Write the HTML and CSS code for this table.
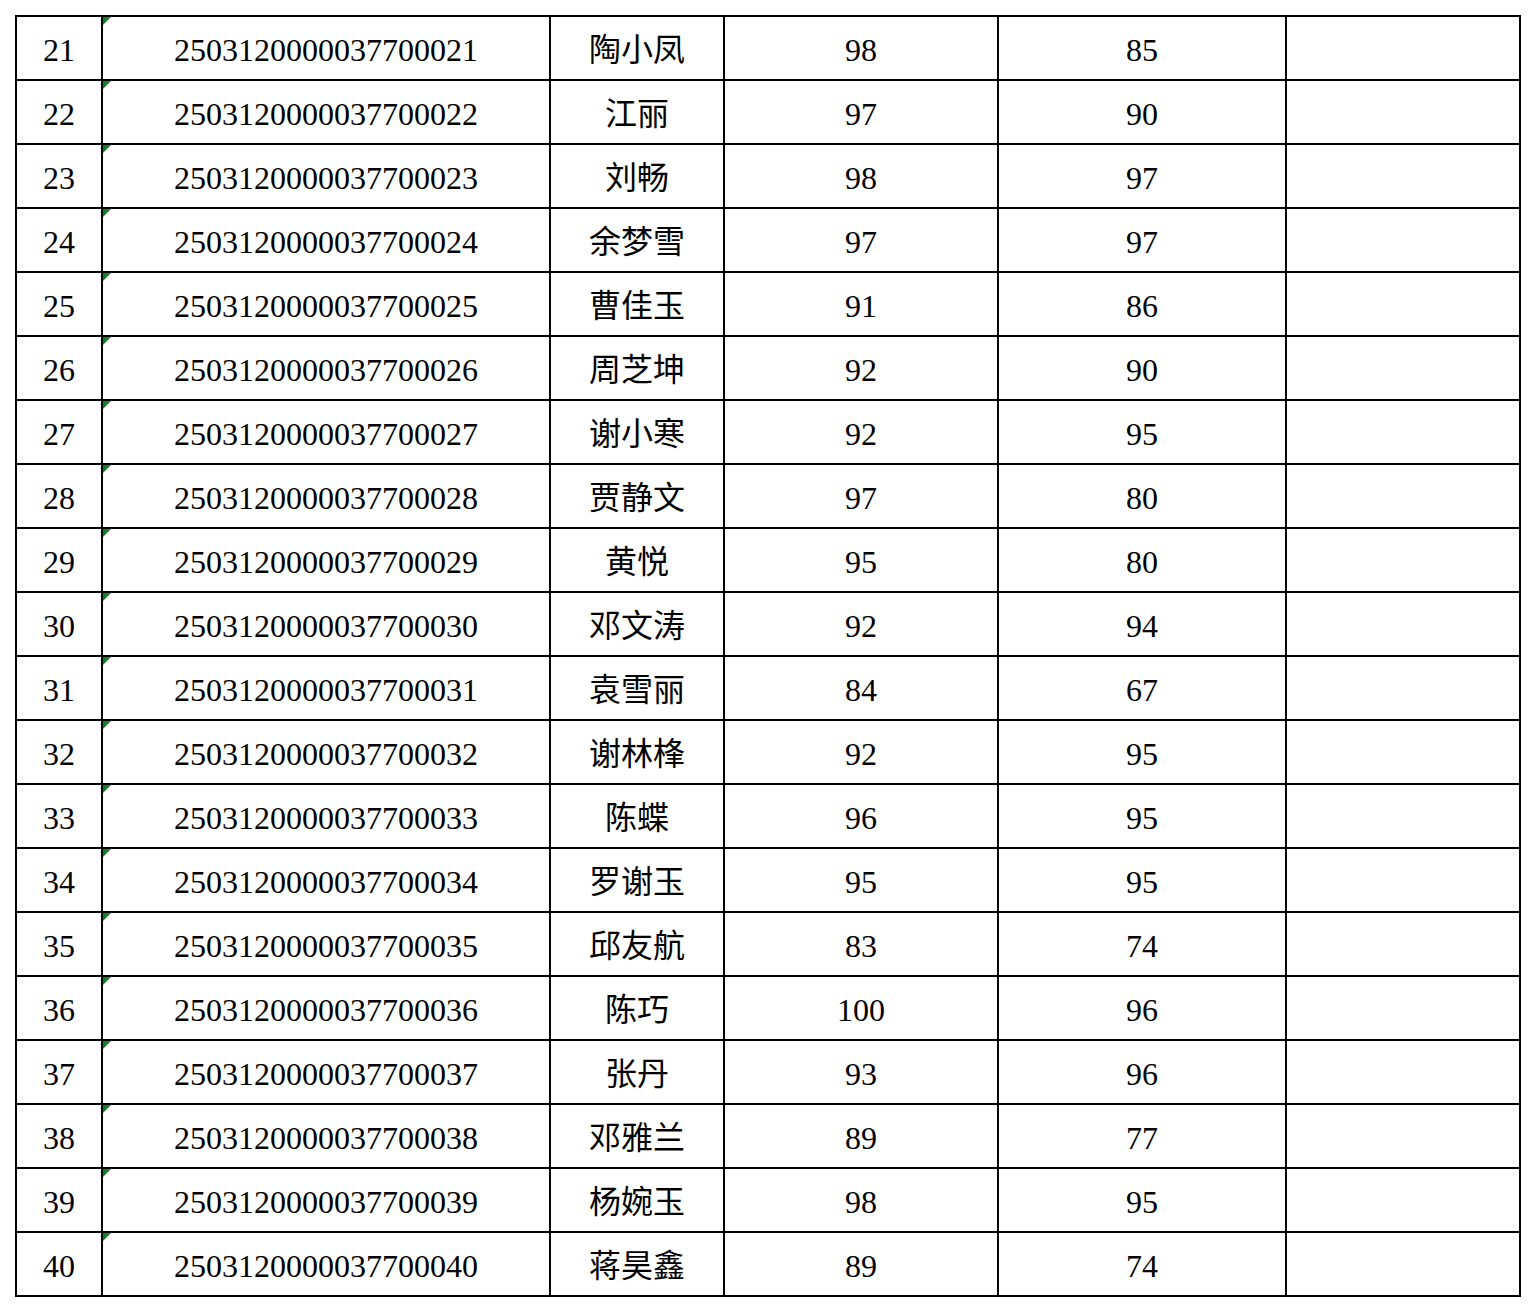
FILE: index.html
```html
<!DOCTYPE html>
<html lang="zh-CN">
<head>
<meta charset="utf-8">
<title>名单</title>
<link rel="stylesheet" href="styles.css">
</head>
<body>
<div class="sheet">
<div class="c">21</div><div class="c id">2503120000037700021</div><div class="c">陶小凤</div><div class="c">98</div><div class="c">85</div><div class="c"></div>
<div class="c">22</div><div class="c id">2503120000037700022</div><div class="c">江丽</div><div class="c">97</div><div class="c">90</div><div class="c"></div>
<div class="c">23</div><div class="c id">2503120000037700023</div><div class="c">刘畅</div><div class="c">98</div><div class="c">97</div><div class="c"></div>
<div class="c">24</div><div class="c id">2503120000037700024</div><div class="c">余梦雪</div><div class="c">97</div><div class="c">97</div><div class="c"></div>
<div class="c">25</div><div class="c id">2503120000037700025</div><div class="c">曹佳玉</div><div class="c">91</div><div class="c">86</div><div class="c"></div>
<div class="c">26</div><div class="c id">2503120000037700026</div><div class="c">周芝坤</div><div class="c">92</div><div class="c">90</div><div class="c"></div>
<div class="c">27</div><div class="c id">2503120000037700027</div><div class="c">谢小寒</div><div class="c">92</div><div class="c">95</div><div class="c"></div>
<div class="c">28</div><div class="c id">2503120000037700028</div><div class="c">贾静文</div><div class="c">97</div><div class="c">80</div><div class="c"></div>
<div class="c">29</div><div class="c id">2503120000037700029</div><div class="c">黄悦</div><div class="c">95</div><div class="c">80</div><div class="c"></div>
<div class="c">30</div><div class="c id">2503120000037700030</div><div class="c">邓文涛</div><div class="c">92</div><div class="c">94</div><div class="c"></div>
<div class="c">31</div><div class="c id">2503120000037700031</div><div class="c">袁雪丽</div><div class="c">84</div><div class="c">67</div><div class="c"></div>
<div class="c">32</div><div class="c id">2503120000037700032</div><div class="c">谢林桻</div><div class="c">92</div><div class="c">95</div><div class="c"></div>
<div class="c">33</div><div class="c id">2503120000037700033</div><div class="c">陈蝶</div><div class="c">96</div><div class="c">95</div><div class="c"></div>
<div class="c">34</div><div class="c id">2503120000037700034</div><div class="c">罗谢玉</div><div class="c">95</div><div class="c">95</div><div class="c"></div>
<div class="c">35</div><div class="c id">2503120000037700035</div><div class="c">邱友航</div><div class="c">83</div><div class="c">74</div><div class="c"></div>
<div class="c">36</div><div class="c id">2503120000037700036</div><div class="c">陈巧</div><div class="c">100</div><div class="c">96</div><div class="c"></div>
<div class="c">37</div><div class="c id">2503120000037700037</div><div class="c">张丹</div><div class="c">93</div><div class="c">96</div><div class="c"></div>
<div class="c">38</div><div class="c id">2503120000037700038</div><div class="c">邓雅兰</div><div class="c">89</div><div class="c">77</div><div class="c"></div>
<div class="c">39</div><div class="c id">2503120000037700039</div><div class="c">杨婉玉</div><div class="c">98</div><div class="c">95</div><div class="c"></div>
<div class="c">40</div><div class="c id">2503120000037700040</div><div class="c">蒋昊鑫</div><div class="c">89</div><div class="c">74</div><div class="c"></div>
</div>
</body>
</html>
```
FILE: styles.css
```css
html, body {
  margin: 0;
  padding: 0;
  background: #ffffff;
}
body {
  padding: 15px 0 0 15px;
  font-family: "Liberation Serif", "Noto Sans CJK SC", serif;
  color: #000000;
}
.sheet {
  display: grid;
  grid-template-columns: 84px 446px 172px 272px 286px 232px;
  grid-auto-rows: 62px;
  gap: 2px;
  padding: 2px;
  background: #000000;
  width: max-content;
}
.c {
  position: relative;
  background: #ffffff;
  display: flex;
  align-items: center;
  justify-content: center;
  font-size: 32px;
  line-height: 1;
  padding-top: 3px;
  box-sizing: border-box;
}
.id::before {
  content: "";
  position: absolute;
  left: 0;
  top: 0;
  width: 0;
  height: 0;
  border-top: 8px solid #1a7f1a;
  border-right: 8px solid transparent;
}
```
